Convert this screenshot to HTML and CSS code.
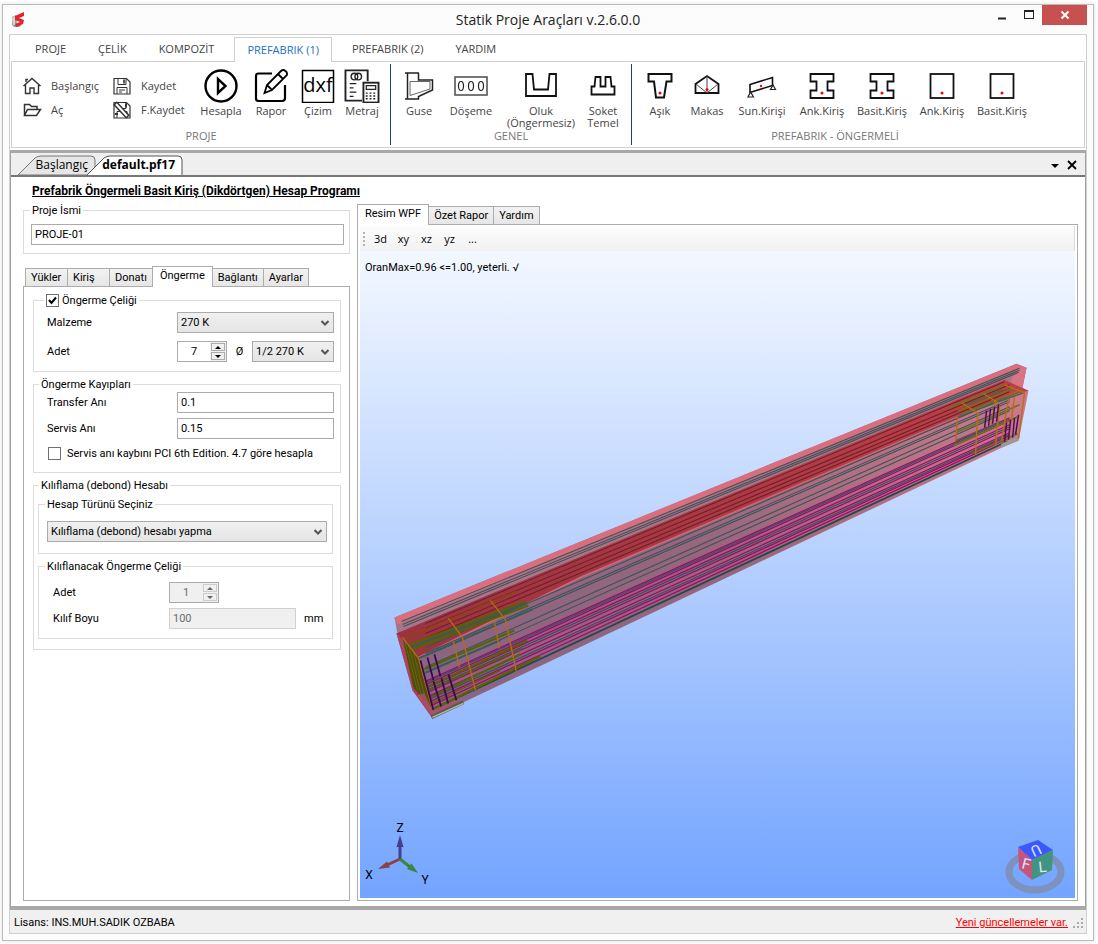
FILE: index.html
```html
<!DOCTYPE html>
<html lang="tr">
<head>
<meta charset="utf-8">
<title>Statik Proje Araçları v.2.6.0.0</title>
<link rel="stylesheet" href="styles.css">
</head>
<body>
<div class="window">
    <header class="titlebar">
        <svg class="app-logo" width="16" height="16" viewBox="0 0 16 16" aria-hidden="true">
            <path d="M1 5 L5 3 L6 12 L11 13 L8 15 L3 15 L1 13 Z" fill="#9a9a9a"/>
            <path d="M1 6 L4 4 L4 13 L2 13 Z" fill="#d4d4d4"/>
            <path d="M4 4 L13 0 L13 4 L8 6 L13 8 L12 12 L5 15 L4 12 L9 10 L4 8 Z" fill="#e0252b"/>
        </svg>
        <h1>Statik Proje Araçları v.2.6.0.0</h1>
        <div class="win-buttons">
            <button aria-label="Simge durumuna küçült"><svg width="12" height="12" viewBox="0 0 12 12"><path d="M2 9.5h8" stroke="#222" stroke-width="2"/></svg></button>
            <button aria-label="Ekranı kapla"><svg width="12" height="12" viewBox="0 0 12 12"><path d="M1 2.5h10M1.500 2v8M10.500 2v8M1 9.500h10" stroke="#222" fill="none"/><path d="M1 2h10" stroke="#222" stroke-width="2"/></svg></button>
            <button class="close" aria-label="Kapat"><svg width="12" height="12" viewBox="0 0 12 12"><path d="M2.500 2.500l7 7M9.500 2.500l-7 7" stroke="#fff" stroke-width="2"/></svg></button>
        </div>
    </header>

    <div class="client">
        <nav class="ribbon-tabs">
            <button>PROJE</button>
            <button>ÇELİK</button>
            <button>KOMPOZİT</button>
            <button class="active">PREFABRIK (1)</button>
            <button>PREFABRIK (2)</button>
            <button>YARDIM</button>
        </nav>

        <div class="ribbon">
            <section class="group">
                <div class="items">
                    <div class="small-items">
                        <button><svg width="20" height="18" viewBox="0 0 20 18"><path d="M1.500 9L10 1.500L18.500 9M3.500 8V16.500H8V11H12V16.500H16.500V8M4 5V2.500h2" fill="none" stroke="#333" stroke-width="1.400"/></svg>Başlangıç</button>
                        <button><svg width="20" height="18" viewBox="0 0 20 18"><path d="M2 1.500h12.500l3.500 3.500v12H2z" fill="none" stroke="#333" stroke-width="1.200"/><path d="M6 1.500v6h8v-6M5 17v-6.500h10V17M7 13h6M7 15h3" fill="none" stroke="#333"/><path d="M11 2.500h2v4h-2z" fill="#555"/></svg>Kaydet</button>
                        <button><svg width="20" height="18" viewBox="0 0 20 18"><path d="M2.500 14.500V3.500h5l2 2h5.500v3M2.500 14.500l3-6h13l-4 6z" fill="none" stroke="#333" stroke-width="1.500"/></svg>Aç</button>
                        <button><svg width="20" height="18" viewBox="0 0 20 18"><path d="M2 1.500h12.500l3.500 3.500v12H2z" fill="none" stroke="#333" stroke-width="1.200"/><path d="M6 1.500v6h8v-6M5 17v-6.500h10V17" fill="none" stroke="#333"/><path d="M3 2l13 14" stroke="#333" stroke-width="5"/><path d="M4 3l11 12" stroke="#fff" stroke-width="2"/><path d="M14 2.500v4M3 13h3" stroke="#333" stroke-width="2"/></svg>F.Kaydet</button>
                    </div>
                    <button class="item wide-2"><svg width="34" height="34" viewBox="0 0 34 34"><circle cx="17" cy="17" r="15.500" fill="none" stroke="#000" stroke-width="2.400"/><path d="M14 10v14l7.500-7z" fill="none" stroke="#000" stroke-width="2.400"/></svg>Hesapla</button>
                    <button class="item wide-2"><svg width="34" height="34" viewBox="0 0 34 34"><path d="M18 4.500H4.500Q2 4.500 2 7v22.500Q2 32 4.500 32H28q3 0 3-3V16" fill="none" stroke="#000" stroke-width="2.200"/><path d="M10.500 24l2.500-8L27 2q2-2 4.500 0t1 4.500L18 21zM24 5l5.500 5.500M13 16l5 5" fill="none" stroke="#000" stroke-width="1.800"/></svg>Rapor</button>
                    <button class="item"><svg width="34" height="34" viewBox="0 0 34 34"><rect x="1.500" y="1.500" width="31" height="32" fill="#fff" stroke="#000" stroke-width="1.500"/><text class="dxf" x="17" y="23" text-anchor="middle">dxf</text></svg>Çizim</button>
                    <button class="item"><svg width="38" height="36" viewBox="0 0 38 36"><path d="M19 33.500H1.500v-32H25V13" fill="none" stroke="#222" stroke-width="2"/><circle cx="11" cy="8" r="3.500" fill="none" stroke="#222" stroke-width="1.500"/><circle cx="15" cy="8" r="3.500" fill="none" stroke="#222" stroke-width="1.500"/><path d="M6 15.500h7M6 20h4M6 24.500h7M6 29h4" stroke="#222" stroke-width="1.500"/><rect x="20.500" y="14.500" width="16" height="21" fill="#fff" stroke="#222" stroke-width="2"/><path d="M23.500 17.500h10v4h-10z" fill="none" stroke="#222" stroke-width="1.300"/><path d="M23 25.500h11M23 28.500h11M23 31.500h11" stroke="#222" stroke-width="1.500" stroke-dasharray="2 2"/></svg>Metraj</button>
                </div>
                <h2>PROJE</h2>
            </section>

            <section class="group">
                <div class="items">
                    <button class="item"><svg width="30" height="34" viewBox="0 0 30 34"><path d="M1 4h14M3.500 4v26M1 30h14M14.500 4v7h14v10l-14 6.500v3" fill="none" stroke="#222" stroke-width="1.500"/><path d="M6 12.500h20v7.500L6 26.500z" fill="none" stroke="#666"/></svg>Guse</button>
                    <button class="item wide-3"><svg width="34" height="34" viewBox="0 0 34 34"><rect x="1" y="8" width="32" height="18" fill="none" stroke="#555" stroke-width="1.600"/><g fill="none" stroke="#222" stroke-width="1.200"><ellipse cx="7" cy="17" rx="2.500" ry="4.500"/><ellipse cx="17" cy="17" rx="2.500" ry="4.500"/><ellipse cx="27" cy="17" rx="2.500" ry="4.500"/></g></svg>Döşeme</button>
                    <button class="item wide-4"><svg width="34" height="34" viewBox="0 0 34 34"><path d="M2 5h6.500l1.500 15.500h14L25.500 5H32v22H2z" fill="none" stroke="#111" stroke-width="1.800"/></svg>Oluk<br>(Öngermesiz)</button>
                    <button class="item"><svg width="26" height="34" viewBox="0 0 26 34"><path d="M1.500 25.500v-8h3l1-9.500h5v9.500h5V8h5l1 9.500h3v8z" fill="none" stroke="#111" stroke-width="1.800"/></svg>Soket<br>Temel</button>
                </div>
                <h2>GENEL</h2>
            </section>

            <section class="group">
                <div class="items">
                    <button class="item"><svg width="26" height="34" viewBox="0 0 26 34"><path d="M1.500 5h23v7.500h-5l-2.500 16H9l-2-16H1.500z" fill="none" stroke="#111" stroke-width="2"/><circle cx="13" cy="24" r="1.500" fill="red"/></svg>Aşık</button>
                    <button class="item wide-2"><svg width="26" height="34" viewBox="0 0 26 34"><path d="M1.500 24V15L13 7l11.500 8v9z" fill="none" stroke="#111" stroke-width="1.800"/><path d="M13 7v17M2 15l11 9 11-9" fill="none" stroke="#444"/><circle cx="13" cy="20.500" r="1.500" fill="red"/></svg>Makas</button>
                    <button class="item wide-3"><svg width="30" height="34" viewBox="0 0 30 34"><path d="M3 15.500L25.500 8.500v8L3 23.500z" fill="none" stroke="#111" stroke-width="1.600"/><path d="M3.500 23l-2.500 5h5.500zM26 16l-2.500 4.500h5z" fill="none" stroke="#222" stroke-width="1.200"/><circle cx="14" cy="17" r="1.200" fill="red"/></svg>Sun.Kirişi</button>
                    <button class="item wide-3"><svg width="26" height="34" viewBox="0 0 26 34"><path d="M1.500 5h23v7.500h-6v9h6V29h-23v-7.500h6v-9h-6z" fill="none" stroke="#111" stroke-width="1.800"/><circle cx="13" cy="24" r="1.500" fill="red"/></svg>Ank.Kiriş</button>
                    <button class="item wide-3"><svg width="26" height="34" viewBox="0 0 26 34"><path d="M1.500 5h23v7.500h-6v9h6V29h-23v-7.500h6v-9h-6z" fill="none" stroke="#111" stroke-width="1.800"/><circle cx="13" cy="24" r="1.500" fill="red"/></svg>Basit.Kiriş</button>
                    <button class="item wide-3"><svg width="26" height="34" viewBox="0 0 26 34"><rect x="1.500" y="5" width="23" height="24" fill="none" stroke="#111" stroke-width="1.800"/><circle cx="13" cy="24" r="1.500" fill="red"/></svg>Ank.Kiriş</button>
                    <button class="item wide-3"><svg width="26" height="34" viewBox="0 0 26 34"><rect x="1.500" y="5" width="23" height="24" fill="none" stroke="#111" stroke-width="1.800"/><circle cx="13" cy="24" r="1.500" fill="red"/></svg>Basit.Kiriş</button>
                </div>
                <h2>PREFABRIK - ÖNGERMELİ</h2>
            </section>
        </div>

        <main class="dock">
            <div class="doc-tabs">
                <button class="doc-tab"><svg width="79" height="20" viewBox="0 0 79 20" aria-hidden="true"><path d="M1 20L18 3Q21 1 24 1H74Q78 1 78 5V20z" fill="#e6e6e6" stroke="#777"/></svg><span>Başlangıç</span></button>
                <button class="doc-tab active"><svg width="97" height="20" viewBox="0 0 97 20" aria-hidden="true"><path d="M1 20L18 3Q21 1 24 1H92Q96 1 96 5V20" fill="#fff" stroke="#555"/></svg><span>default.pf17</span></button>
                <div class="doc-actions">
                    <button aria-label="Pencereler"><svg width="10" height="12" viewBox="0 0 10 12"><path d="M1 5h8l-4 4z" fill="#000"/></svg></button>
                    <button aria-label="Sekmeyi kapat"><svg width="10" height="12" viewBox="0 0 10 12"><path d="M1 2l8 8M9 2l-8 8" stroke="#000" stroke-width="1.800"/></svg></button>
                </div>
            </div>

            <div class="doc">
                <h2 class="doc-title">Prefabrik Öngermeli Basit Kiriş (Dikdörtgen) Hesap Programı</h2>
                <div class="columns">
                    <form class="left">
                        <fieldset class="project">
                            <legend><label for="proje">Proje İsmi</label></legend>
                            <input id="proje" type="text" value="PROJE-01">
                        </fieldset>

                        <div class="tabs">
                            <button type="button">Yükler</button>
                            <button type="button">Kiriş</button>
                            <button type="button">Donatı</button>
                            <button type="button" class="active">Öngerme</button>
                            <button type="button">Bağlantı</button>
                            <button type="button">Ayarlar</button>
                        </div>
                        <div class="panel">
                            <fieldset class="strand">
                                <legend><input type="checkbox" id="celik" checked><label for="celik">Öngerme Çeliği</label></legend>
                                <div class="row">
                                    <label for="malzeme">Malzeme</label>
                                    <select id="malzeme"><option>270 K</option></select>
                                </div>
                                <div class="row">
                                    <label for="adet">Adet</label>
                                    <div class="pair">
                                        <span class="spin"><input id="adet" type="number" value="7"><span class="arrows"><button type="button" class="up" aria-label="Artır"></button><button type="button" class="down" aria-label="Azalt"></button></span></span>
                                        <label for="cap">Ø</label>
                                        <select id="cap"><option>1/2 270 K</option></select>
                                    </div>
                                </div>
                            </fieldset>

                            <fieldset class="losses">
                                <legend>Öngerme Kayıpları</legend>
                                <div class="row">
                                    <label for="transfer">Transfer Anı</label>
                                    <input id="transfer" type="text" value="0.1">
                                </div>
                                <div class="row">
                                    <label for="servis">Servis Anı</label>
                                    <input id="servis" type="text" value="0.15">
                                </div>
                                <div class="check">
                                    <input type="checkbox" id="pci"><label for="pci">Servis anı kaybını PCI 6th Edition. 4.7 göre hesapla</label>
                                </div>
                            </fieldset>

                            <fieldset class="debond">
                                <legend>Kılıflama (debond) Hesabı</legend>
                                <fieldset class="method">
                                    <legend><label for="tur">Hesap Türünü Seçiniz</label></legend>
                                    <select id="tur"><option>Kılıflama (debond) hesabı yapma</option></select>
                                </fieldset>
                                <fieldset class="sleeve">
                                    <legend>Kılıflanacak Öngerme Çeliği</legend>
                                    <div class="row">
                                        <label for="kilif-adet">Adet</label>
                                        <span class="spin"><input id="kilif-adet" type="number" value="1" disabled><span class="arrows"><button type="button" class="up" aria-label="Artır" disabled></button><button type="button" class="down" aria-label="Azalt" disabled></button></span></span>
                                    </div>
                                    <div class="row">
                                        <label for="boy">Kılıf Boyu</label>
                                        <input id="boy" type="text" value="100" disabled>
                                        <span class="unit">mm</span>
                                    </div>
                                </fieldset>
                            </fieldset>
                        </div>
                    </form>

                    <section class="right">
                        <div class="tabs">
                            <button class="active">Resim WPF</button>
                            <button>Özet Rapor</button>
                            <button>Yardım</button>
                        </div>
                        <div class="view-frame">
                            <div class="view-tools">
                                <i class="grip"></i>
                                <button>3d</button>
                                <button>xy</button>
                                <button>xz</button>
                                <button>yz</button>
                                <button>...</button>
                            </div>
                            <div class="viewport">
                                <p>OranMax=0.96 &lt;=1.00, yeterli. √</p>
                                <svg class="beam" viewBox="361 250 713 648" role="img" aria-label="Kiriş modeli">
                                    <defs>
                                        <linearGradient id="web" x1="0" y1="1" x2="1" y2="0"><stop offset="0" stop-color="#876383"/><stop offset="0.500" stop-color="#98667d"/><stop offset="1" stop-color="#cf7b89"/></linearGradient>
                                        <linearGradient id="flange"><stop offset="0" stop-color="#9a333f"/><stop offset="1" stop-color="#bf3f48"/></linearGradient>
                                    </defs>
                                    <!-- slab -->
                                    <path d="M394 617L1017 363L1027 367L1022 392L397 634z" fill="#a77489"/>
                                    <path d="M394 617L1017 363L1027 367L1026 371L1016 369L397 624z" fill="#d96f7e"/>
                                    <path d="M1016 369L1027 367L1022 392L1010 384z" fill="#d77584"/>
                                    <path d="M401 621L1020 367.500M402 624L1020 369.500M403 626L1019 371.500" stroke="#435257" stroke-width="1.100"/>
                                    <!-- girder -->
                                    <path d="M396 633L1005 379L1029 390L1019 440L1002 447L463 702L432 718L412 690z" fill="url(#web)"/>
                                    <path d="M396 633L1005 379L1029 390L1018 393L580 577L418 657z" fill="url(#flange)"/>
                                    <path d="M418 657L580 577L1018 391" stroke="#c96b79" stroke-width="1.500" fill="none"/>
                                    <path d="M396 633L418 657L432 718L412 690z" fill="#a9465a"/>
                                    <path d="M425 623L1005 381M425 628L1010 384M425 633L1010 388M425 638L1010 391" stroke="#6d202b" stroke-width="1.100"/>
                                    <path d="M425 647L1010 395M425 653L1010 399M425 655.500L1010 401M425 667L1010 406M425 673L1010 410" stroke="#39545a" stroke-width="1.100"/>
                                    <path d="M425 681L1010 417M425 684.500L1010 420M425 688L1010 424M427 692L1010 428M428 696L1010 432M430 701L1010 435M431 705L1008 438" stroke="#a00a68" stroke-width="1.300"/>
                                    <path d="M425 682.500L1010 418.500M426 690L1010 426M429 699L1010 433.500" stroke="#2f5363" stroke-width="1.200"/>
                                    <path d="M431 709.500L1008 440.500" stroke="#24484c" stroke-width="1.800"/>
                                    <!-- near end cage -->
                                    <path d="M402 637L418 658L432 709L413 688z" fill="#514d0b"/>
                                    <path d="M404 640l13 50M408 644l13 52M412 648l14 55" stroke="#69640f" stroke-width="1"/>
                                    <path d="M408 645L525 601M411 649L528 605M424 669L514 630M428 686L527 640M430 697L520 654M432 709L540 656" stroke="#566300" stroke-width="2.200"/>
                                    <path d="M410 647L526 603M418 658L532 609M425 672L500 640" stroke="#365c57" stroke-width="2"/>
                                    <path d="M428 690L522 648M431 703L500 670" stroke="#566300" stroke-width="1.500"/>
                                    <path d="M404 638L516 591" stroke="#944018" stroke-width="2"/>
                                    <path d="M402 637L418 658L432 709M448 618L462 637L475 690M490 600L505 619L516 671M453 641l6 26M494 621l5 27" stroke="#b66a16" stroke-width="1.300" fill="none"/>
                                    <path d="M420 660l13 50M427 657l6 23M434 654l6 22M433 681l8 26M441 678l7 26M448 674l8 26" stroke="#3c0752" stroke-width="1.800"/>
                                    <path d="M414 690l16 21" stroke="#d11a73" stroke-width="2" stroke-dasharray="2 2"/>
                                    <path d="M416 695L424 693L432 710L455 700L463 702L432 716z" fill="#a85263" opacity=".8"/>
                                    <path d="M431 717L463 702" stroke="#5a5a52" stroke-width="4"/>
                                    <path d="M432 717L463 703" stroke="#b5b9a5" stroke-width="1.400"/>
                                    <!-- far end cage -->
                                    <path d="M950 407L1006 384M958 410L1014 387M962 413L1022 390M956 432L1020 404M954 445L1018 416M972 453L1018 433" stroke="#6b7510" stroke-width="1.700"/>
                                    <path d="M965 404L1003 389M958 416L1024 392M956 440L1000 421" stroke="#44605a" stroke-width="1.300"/>
                                    <path d="M958 416l-2 24M978 413l-2 40M1000 405l-4 39M1005 384l20 8-6 46M1009 398l-7 42M1015 396l-6 42M996 399l-4 25M962 402l17 11M984 393l16 10" stroke="#b96c19" stroke-width="1.400" fill="none"/>
                                    <path d="M987 410l-2 17M991 408l-2 17M995 406l-2 17M999 404l-2 17M1007 422l-2 19M1011 419l-2 20M1015 417l-2 20M1019 414l-3 20" stroke="#4c0b5d" stroke-width="1.500"/>
                                    <path d="M1002 445l16-7" stroke="#9b9b91" stroke-width="3.500"/>
                                </svg>
                                <svg class="axes" width="70" height="70" viewBox="0 0 70 70" role="img" aria-label="Eksenler">
                                    <path d="M37 39V24" stroke="#41418c" stroke-width="3"/><path d="M33.500 27L37 15l3.500 12z" fill="#41418c"/>
                                    <path d="M37 39l-13 6" stroke="#8a4046" stroke-width="3"/><path d="M15 49l9-7.500 3 6z" fill="#8a4046"/>
                                    <path d="M37 39l10 8" stroke="#3c853c" stroke-width="3"/><path d="M55 53l-11-4 4.500-5.500z" fill="#3c853c"/>
                                    <text x="37" y="12">Z</text><text x="6" y="59">X</text><text x="62" y="64">Y</text>
                                </svg>
                                <svg class="cube" width="64" height="60" viewBox="1002 838 64 60" role="img" aria-label="Görünüm küpü">
                                    <ellipse cx="1034" cy="872" rx="26" ry="18" fill="none" stroke="#7d92bd" stroke-width="7"/>
                                    <path d="M1017 847L1037 840L1052 850L1031 860z" fill="#3c57ff"/>
                                    <path d="M1017 847L1031 860V880L1018 869z" fill="#c4557c"/>
                                    <path d="M1031 860L1052 850L1051 870L1031 880z" fill="#40957e"/>
                                    <text class="face" transform="translate(1035 850) rotate(155)" y="5">U</text>
                                    <text class="face" transform="translate(1024 869) rotate(14)">F</text>
                                    <text class="face" transform="translate(1042 872) rotate(-6)">L</text>
                                </svg>
                            </div>
                        </div>
                    </section>
                </div>
            </div>
        </main>

        <footer class="status">
            <span>Lisans: INS.MUH.SADIK OZBABA</span>
            <a href="#">Yeni güncellemeler var.</a>
            <svg width="12" height="12" viewBox="0 0 12 12" aria-hidden="true"><path d="M9 1h2v2H9zM5 5h2v2H5zM9 5h2v2H9zM1 9h2v2H1zM5 9h2v2H5zM9 9h2v2H9z" fill="#aaa"/></svg>
        </footer>
    </div>
</div>
</body>
</html>
```
FILE: styles.css
```css
* {
    box-sizing: border-box;
}
body {
    margin: 0;
    background: #fff;
    color: #000;
    font: 11px/13px Roboto, "Liberation Sans", Arial, sans-serif;
}
button {
    padding: 0;
    border: 0;
    background: none;
    color: inherit;
    font: inherit;
}
svg {
    display: block;
    flex: none;
}
h1, h2, p {
    margin: 0;
    font-weight: normal;
}

.window {
    display: flex;
    flex-direction: column;
    min-height: calc(100vh - 7px);
    margin: 4px 4px 3px 2px;
    padding: 0 6px 6px;
    border: 1px solid #bbb;
    background: #fcfcfc;
    box-shadow: 0 0 4px #ddd;
}

/* title bar */
.titlebar {
    display: grid;
    grid-template-columns: 1fr auto 1fr;
    height: 29px;
}
.app-logo {
    align-self: center;
    margin-left: 2px;
}
.titlebar h1 {
    align-self: center;
    color: #222;
    font: 14px/20px "Open Sans", "Segoe UI", sans-serif;
}
.win-buttons {
    display: flex;
    justify-content: flex-end;
    align-items: flex-start;
}
.win-buttons button {
    display: grid;
    place-items: center;
    width: 27px;
    height: 20px;
}
.win-buttons .close {
    width: 45px;
    background: #c75050;
}

/* ribbon */
.client {
    display: flex;
    flex: 1;
    flex-direction: column;
    border: 1px solid #d0d0d0;
    background: #fff;
}
.ribbon-tabs {
    display: flex;
    height: 26px;
    padding: 2px 0 0 13px;
    color: #444;
    font: 11px/24px "Open Sans", "Segoe UI", sans-serif;
}
.ribbon-tabs button {
    padding: 0 12px;
    margin-right: 8px;
}
.ribbon-tabs .active {
    position: relative;
    height: 25px;
    border: 1px solid #d0d0d0;
    border-bottom: 0;
    background: #fff;
    color: #1b6fc4;
}
.ribbon {
    display: flex;
    height: 87px;
    margin: 0 1px 2px;
    padding: 2px 0;
    border: 1px solid #d0d0d0;
    color: #444;
    font: 11px/12px "Open Sans", "Segoe UI", sans-serif;
}
.group {
    display: flex;
    flex-direction: column;
    justify-content: space-between;
    padding: 5px 6px 2px;
}
.group + .group {
    border-left: 1px solid #164287;
}
.items {
    display: flex;
    height: 60px;
}
.group h2 {
    color: #777;
    font-size: 11px;
    line-height: 14px;
    text-align: center;
}
.item {
    display: flex;
    flex-direction: column;
    align-items: center;
    width: 44px;
    white-space: nowrap;
}
.item svg {
    height: 34px;
    margin-bottom: 2px;
}
.wide-2 {
    width: 50px;
}
.wide-3 {
    width: 60px;
}
.wide-4 {
    width: 80px;
}
.small-items {
    display: grid;
    grid-template-columns: 90px 84px;
    grid-auto-rows: 24px;
    align-content: start;
    padding: 5px 0 0 4px;
}
.small-items button {
    display: flex;
    align-items: center;
    gap: 9px;
}
.dxf {
    font-size: 20px;
    fill: #000;
}

/* documents */
.dock {
    display: flex;
    flex: 1;
    flex-direction: column;
    border-top: 3px solid #a8a8a8;
    border-bottom: 4px solid #a8a8a8;
    border-left: 1px solid #a0a0a0;
    border-right: 1px solid #a0a0a0;
}
.doc-tabs {
    display: flex;
    align-items: flex-end;
    height: 24px;
    padding-left: 6px;
    border-bottom: 2px solid #777;
    background: #efefef;
    font: 12px/18px "Open Sans", "Segoe UI", sans-serif;
}
.doc-tab {
    display: grid;
}
.doc-tab svg,
.doc-tab span {
    grid-area: 1 / 1;
}
.doc-tab span {
    padding: 1px 8px 0 16px;
    text-align: right;
}
.doc-tab.active {
    margin-left: -10px;
    font-weight: bold;
}
.doc-actions {
    display: flex;
    gap: 7px;
    margin-left: auto;
    padding: 0 8px 4px 0;
}
.doc {
    display: flex;
    flex: 1;
    flex-direction: column;
    padding: 7px 7px 5px 12px;
}
.doc-title {
    padding-left: 9px;
    margin-bottom: 6px;
    font-size: 12px;
    line-height: 14px;
    font-weight: bold;
    text-decoration: underline;
}
.columns {
    display: grid;
    flex: 1;
    grid-template-columns: 327px minmax(0, 1fr);
    gap: 7px;
}
.left,
.right {
    display: flex;
    flex-direction: column;
}

/* tab strips */
.tabs {
    display: flex;
    align-items: flex-end;
    padding-left: 2px;
}
.right .tabs {
    padding-left: 0;
}
.tabs button {
    height: 18px;
    padding: 0 5px;
    margin-right: -1px;
    border: 1px solid #acacac;
    border-bottom: 0;
    background: linear-gradient(#f2f2f2, #e6e6e6);
    white-space: nowrap;
}
.left .tabs button {
    min-width: 43px;
    text-align: left;
}
.tabs .active {
    position: relative;
    height: 21px;
    margin-bottom: -1px;
    padding: 0 7px 3px;
    background: #fff;
}

/* form */
fieldset {
    min-width: 0;
    margin: 0;
    border: 1px solid #dcdcdc;
}
legend {
    display: flex;
    align-items: center;
    height: 13px;
    padding: 0 2px;
}
.left input,
.left select {
    width: 100%;
    height: 21px;
    margin: 0;
    padding: 0 3px;
    border: 1px solid #ababab;
    border-radius: 0;
    background: #fff;
    color: #000;
    font: inherit;
}
.left select {
    appearance: none;
    background: url("data:image/svg+xml,%3Csvg xmlns='http://www.w3.org/2000/svg' width='8' height='6'%3E%3Cpath d='M0.500 1l3.500 3.500L7.500 1' fill='none' stroke='%23555' stroke-width='2'/%3E%3C/svg%3E") no-repeat right 4px center, linear-gradient(#f0f0f0, #e5e5e5);
}
.left input[type="checkbox"] {
    appearance: none;
    flex: none;
    width: 13px;
    height: 13px;
    margin-right: 3px;
    padding: 0;
    border: 1px solid #707070;
}
.left input[type="checkbox"]:checked {
    background: url("data:image/svg+xml,%3Csvg xmlns='http://www.w3.org/2000/svg' width='11' height='11'%3E%3Cpath d='M2 5l2.500 3L9 2.500' fill='none' stroke='%23000' stroke-width='2'/%3E%3C/svg%3E") center no-repeat;
}
.left input[type="number"] {
    appearance: textfield;
    border: 0;
    height: 19px;
    text-align: center;
}
.left input::-webkit-inner-spin-button {
    appearance: none;
    margin: 0;
}
.left input:disabled {
    border-color: #d0d0d0;
    background: #f0f0f0;
    color: #6d6d6d;
}
.spin {
    display: flex;
    width: 50px;
    height: 21px;
    border: 1px solid #ababab;
}
.arrows {
    display: grid;
    flex: none;
    gap: 1px;
    width: 16px;
    padding: 1px;
    background: #f0f0f0;
}
.arrows button {
    display: grid;
    place-items: center;
    border: 1px solid #acacac;
}
.arrows button::before {
    border: 3px solid transparent;
    border-top: 0;
    border-bottom-color: #000;
    content: "";
}
.arrows .down::before {
    transform: scaleY(-1);
}
.arrows button:disabled {
    border-color: #ccc;
}
.arrows button:disabled::before {
    border-bottom-color: #666;
}
.project {
    margin-bottom: 12px;
    padding: 7px 5px 8px 7px;
}
.project legend {
    margin-left: -1px;
}
.panel {
    display: flex;
    flex: 1;
    flex-direction: column;
    gap: 6px;
    padding: 7px 8px 7px 9px;
    border: 1px solid #acacac;
}
.row {
    display: grid;
    grid-template-columns: 130px 1fr;
    align-items: center;
}
.strand,
.losses {
    padding: 5px 6px 9px 13px;
}
.strand legend {
    margin-left: -3px;
}
.strand .row + .row {
    margin-top: 8px;
}
.pair {
    display: grid;
    grid-template-columns: 50px 25px 1fr;
    align-items: center;
    text-align: center;
}
.losses {
    padding-top: 1px;
    padding-bottom: 12px;
}
.losses legend {
    margin-left: -8px;
}
.losses .row + .row {
    margin-top: 5px;
}
.check {
    display: flex;
    align-items: center;
    margin-top: 8px;
    padding-left: 1px;
    white-space: nowrap;
}
.check input[type="checkbox"] {
    margin-right: 6px;
}
.debond {
    padding: 6px 7px 10px 4px;
}
.debond > legend {
    margin-left: 1px;
}
.method {
    margin-bottom: 6px;
    padding: 10px 5px 11px 8px;
}
.method legend,
.sleeve legend {
    margin-left: -2px;
}
.method legend {
    padding-left: 2px;
}
.sleeve {
    padding: 9px 8px;
}
.sleeve .row {
    grid-template-columns: 116px 1fr 28px;
    padding-left: 6px;
}
.unit {
    padding-left: 8px;
}
.sleeve .row + .row {
    margin-top: 5px;
}

/* model view */
.view-frame {
    display: flex;
    flex: 1;
    flex-direction: column;
    padding: 1px 2px 2px;
    border: 1px solid #acacac;
}
.view-tools {
    display: flex;
    align-items: center;
    height: 25px;
    padding-left: 3px;
    border-right: 1px solid #ddd;
    background: linear-gradient(#fdfdfd, #f1f1f1);
    font: 11px/14px "Open Sans", "Segoe UI", sans-serif;
}
.view-tools button {
    width: 23px;
}
.grip {
    width: 2px;
    height: 14px;
    margin-right: 4px;
    background: repeating-linear-gradient(#b5b5b5 0 2px, transparent 2px 4px);
}
.viewport {
    position: relative;
    flex: 1;
    min-height: 400px;
    background: linear-gradient(#f3f8ff, #73a4ff);
}
/* the model fills the view, everything else floats over it */
.beam {
    position: absolute;
    inset: 0;
    width: 100%;
    height: 100%;
}
.viewport p {
    padding: 10px 5px;
}
.axes {
    position: absolute;
    left: 3px;
    bottom: 8px;
    font-size: 12px;
    text-anchor: middle;
}
.cube {
    position: absolute;
    right: 8px;
    bottom: 0;
}
.face {
    fill: #dfe6ff;
    font-size: 15px;
    text-anchor: middle;
}

/* status bar */
.status {
    display: flex;
    align-items: center;
    height: 23px;
    padding: 2px 2px 0 4px;
    background: #f0f0f0;
}
.status a {
    margin-left: auto;
    margin-right: 4px;
    color: red;
}
```
